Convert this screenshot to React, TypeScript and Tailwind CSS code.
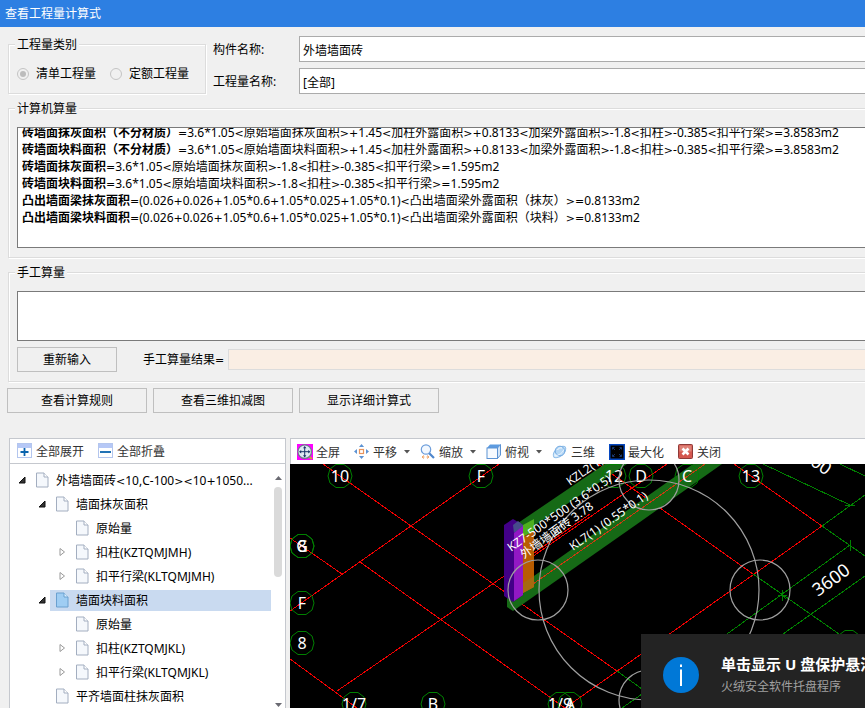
import { useState, type ReactNode } from 'react';

interface TreeItem {
  id: number;
  level: 0 | 1 | 2;
  label: string;
  state?: 'open' | 'closed';
}

const formulas = [
  { name: '砖墙面抹灰面积（不分材质）', value: '=3.6*1.05<原始墙面抹灰面积>+1.45<加柱外露面积>+0.8133<加梁外露面积>-1.8<扣柱>-0.385<扣平行梁>=3.8583m2' },
  { name: '砖墙面块料面积（不分材质）', value: '=3.6*1.05<原始墙面块料面积>+1.45<加柱外露面积>+0.8133<加梁外露面积>-1.8<扣柱>-0.385<扣平行梁>=3.8583m2' },
  { name: '砖墙面抹灰面积', value: '=3.6*1.05<原始墙面抹灰面积>-1.8<扣柱>-0.385<扣平行梁>=1.595m2' },
  { name: '砖墙面块料面积', value: '=3.6*1.05<原始墙面块料面积>-1.8<扣柱>-0.385<扣平行梁>=1.595m2' },
  { name: '凸出墙面梁抹灰面积', value: '=(0.026+0.026+1.05*0.6+1.05*0.025+1.05*0.1)<凸出墙面梁外露面积（抹灰）>=0.8133m2' },
  { name: '凸出墙面梁块料面积', value: '=(0.026+0.026+1.05*0.6+1.05*0.025+1.05*0.1)<凸出墙面梁外露面积（块料）>=0.8133m2' },
];

const treeItems: TreeItem[] = [
  { id: 1, level: 0, label: '外墙墙面砖<10,C-100><10+1050...', state: 'open' },
  { id: 2, level: 1, label: '墙面抹灰面积', state: 'open' },
  { id: 3, level: 2, label: '原始量' },
  { id: 4, level: 2, label: '扣柱(KZTQMJMH)', state: 'closed' },
  { id: 5, level: 2, label: '扣平行梁(KLTQMJMH)', state: 'closed' },
  { id: 6, level: 1, label: '墙面块料面积', state: 'open' },
  { id: 7, level: 2, label: '原始量' },
  { id: 8, level: 2, label: '扣柱(KZTQMJKL)', state: 'closed' },
  { id: 9, level: 2, label: '扣平行梁(KLTQMJKL)', state: 'closed' },
  { id: 10, level: 1, label: '平齐墙面柱抹灰面积' },
];

const indent = ['pl-1', 'pl-6', 'pl-11'];

// Grid axis bubbles: [x, y, label]
const axes: [number, number, string][] = [
  [50, 12, '10'],
  [191, 12, 'F'],
  [324, 12, '12'],
  [351, 12, 'D'],
  [397, 12, 'C'],
  [461, 12, '13'],
  [12, 82, 'G'],
  [12, 82, '8'],
  [12, 139, 'F'],
  [12, 179, '8'],
  [64, 240, '1/7'],
  [143, 240, 'B'],
  [270, 240, '1/9'],
  [280, 240, 'A'],
  [559, 178, ''],
];

function Formula({ text }: { text: string }) {
  return text.split(/([<>=+])/).map((part, i) =>
    i % 2 === 1 ? (
      <span key={i} className="font-['DejaVu_Sans',sans-serif] text-[11px] leading-none">{part}</span>
    ) : (
      part
    ),
  );
}

function Group({ title, className, children }: { title: string; className: string; children: ReactNode }) {
  return (
    <fieldset className={`min-w-0 border border-[#dcdcdc] shadow-[inset_1px_1px_0_#fff,1px_1px_0_#fff] ${className}`}>
      <legend className="ml-1.5 h-[18px] bg-[#f0f0f0] px-0.5 leading-[20px]">{title}</legend>
      {children}
    </fieldset>
  );
}

function PushButton({ className, children }: { className: string; children: ReactNode }) {
  return (
    <button type="button" className={`h-[25px] border border-[#bfbfbf] bg-[#f0f0f0] hover:bg-[#e5f1fb] ${className}`}>
      {children}
    </button>
  );
}

function ToolButton({ icon, label, menu }: { icon: ReactNode; label: string; menu?: boolean }) {
  return (
    <button type="button" className={`flex h-[22px] shrink-0 items-center gap-[3px] pl-1.5 text-[#333] hover:bg-[#e8effa] ${menu ? 'pr-0.5' : 'pr-1.5'}`}>
      {icon}
      <span className="pt-0.5">{label}</span>
      {menu && (
        <svg className="ml-1 h-1 w-1.5" viewBox="0 0 6 4">
          <path d="M0 0h6L3 3.5z" fill="#555" />
        </svg>
      )}
    </button>
  );
}

function ExpandIcon({ minus }: { minus?: boolean }) {
  return (
    <svg className="h-4 w-4" viewBox="0 0 16 16">
      <rect x=".5" y=".5" width="14" height="14" fill="#fff" stroke="#b4c6ee" />
      <rect x="1" y="1" width="13" height="4" fill="#b6c8f6" />
      <path d={minus ? 'M2 9h11' : 'M3.5 9h8M7.5 5v8'} stroke="#0a64ad" strokeWidth="1.8" />
    </svg>
  );
}

function FullScreenIcon() {
  return (
    <svg className="h-4 w-4" viewBox="0 0 16 16">
      <rect width="16" height="16" fill="#f0f" />
      <path d="M11.5 12l3.5 3" stroke="#c9a13a" strokeWidth="2" />
      <circle cx="7.7" cy="7.7" r="6.8" fill="#dfe9f2" stroke="#6f7d8c" strokeWidth="1.3" />
      <path d="M3 7.7h9.4M7.7 3v9.4" stroke="#1c3568" strokeWidth="1" />
      <path d="M7.7 2L9.4 4.2H6zM7.7 13.4l1.700-2.200H6zM2 7.700l2.200-1.700v3.400zM13.400 7.700l-2.200-1.700v3.400z" fill="#1c3568" />
    </svg>
  );
}

function PanIcon() {
  return (
    <svg className="h-4 w-4" viewBox="0 0 16 16">
      <rect x="5.5" y="5.5" width="4" height="4" fill="#fff" stroke="#e8945c" strokeWidth="1.2" />
      <path d="M7.5 0l2.6 3H5zM7.500 15l2.600-3H5zM0 7.500L3 5v5zM15 7.500L12 5v5z" fill="#5d93d3" />
    </svg>
  );
}

function ZoomIcon() {
  return (
    <svg className="h-4 w-4" viewBox="0 0 16 16">
      <path d="M9 9l5 5" stroke="#4e86cc" strokeWidth="2.2" />
      <circle cx="6" cy="5.5" r="4.7" fill="#f2f8ff" stroke="#6c9ddb" strokeWidth="1.2" />
      <path d="M2 13h2.500M6.500 13H9M4 11.500L2 13l2 1.500M7 11.500L9 13l-2 1.500" stroke="#f0a568" fill="none" />
    </svg>
  );
}

function CubeIcon() {
  return (
    <svg className="h-4 w-4" viewBox="0 0 16 16">
      <path d="M1 4l3-3.5h10.5L11.5 4z" fill="#5c9be0" />
      <path d="M11.5 4l3-3.5V11l-3 3.5z" fill="#d3e5f8" stroke="#5c93d4" />
      <rect x="1" y="4" width="10.5" height="10.5" fill="#f6faff" stroke="#5c93d4" />
    </svg>
  );
}

function OrbitIcon() {
  return (
    <svg className="h-4 w-4" viewBox="0 0 16 16">
      <ellipse cx="7.5" cy="8" rx="7.500" ry="4" transform="rotate(-40 7.5 8)" fill="#d9ecfb" stroke="#8dbce8" />
      <circle cx="8" cy="7" r="4.8" fill="#b5d7f5" stroke="#73aae2" />
      <path d="M3 11.500c4 0 7-2 9-6" stroke="#e8f4ff" fill="none" />
      <path d="M5.500 6c1-2 3-2.500 4.500-2" stroke="#fff" fill="none" />
    </svg>
  );
}

function MaximizeIcon() {
  return (
    <svg className="h-4 w-4" viewBox="0 0 16 16">
      <rect width="16" height="16" fill="#0648c0" />
      <rect x="1.5" y="1.5" width="13" height="13" fill="#000" />
      <path d="M3.500 5.500v-2h2M10.500 3.500h2v2M12.500 10.500v2h-2M5.500 12.500h-2v-2M4 4l2 2M12 4l-2 2M12 12l-2-2M4 12l2-2" stroke="#2450a0" strokeWidth=".7" fill="none" />
    </svg>
  );
}

function CloseIcon() {
  return (
    <svg className="h-4 w-4" viewBox="0 0 16 16">
      <rect x=".5" y=".5" width="14" height="14" rx="1" fill="#d4574f" stroke="#8e3a38" />
      <rect x="1.5" y="1.5" width="12" height="6" fill="#de8278" />
      <path d="M4.500 4.500l6 6M10.500 4.500l-6 6" stroke="#fff" strokeWidth="2.600" />
    </svg>
  );
}

function PageIcon({ active }: { active: boolean }) {
  return (
    <svg className="h-4 w-3.5 shrink-0" viewBox="0 0 14 16">
      <path d="M.5 1h7.5l4 4v10H.5z" fill={active ? '#9fcdf3' : '#f5f8fc'} stroke={active ? '#6ba0cf' : '#a3aec0'} />
      <path d="M8 1v4h4" fill={active ? '#dcefff' : '#fff'} stroke={active ? '#6ba0cf' : '#a3aec0'} />
    </svg>
  );
}

function Axis({ x, y, label }: { x: number; y: number; label: string }) {
  return (
    <g transform={`translate(${x} ${y})`}>
      <path d="M-4 -11.5H4L10 -7L12 0L10 7L4 11.5H-4L-10 7L-12 0L-10 -7z" fill="none" stroke="#008000" />
      <text y="6" textAnchor="middle" fontSize="16" fill="#fff">{label}</text>
    </g>
  );
}

function Viewport() {
  return (
    <svg className="absolute inset-0 h-full w-full" viewBox="0 0 575 244" preserveAspectRatio="xMinYMin slice">
      <g stroke="#f00000" strokeWidth="1" fill="none" shapeRendering="crispEdges">
        <path d="M33 0L327 207M209 0L0 147M0 74L52 110M70 98L275 244M47 227L377 0M0 195L67 244" />
        <path d="M308 0L463 110M444 0L532 62L275 244" />
      </g>
      <g stroke="#008000" fill="none" shapeRendering="crispEdges">
        <path d="M463 110L549 170M532 62L575 92M532 62L575 31M473 0L560 41M550 0L575 12" />
        <path d="M560 81L437 170M575 112L493 170M327 207L352 225M352 230L332 244" />
        <path d="M555 41.500H565M560 76V87M492 126V137M488 131H497M489 128L496 135" />
      </g>

      {/* Beams and wall */}
      <path d="M228 59L315 0H337L244 62L233 68z" fill="#166a16" />
      <path d="M217 131L403 0H432L350 58L223 147L217 143z" fill="#166a16" />
      <path d="M243 120L415 0" stroke="#c83c10" shapeRendering="crispEdges" />
      <path d="M214 61L223 55L233 61V131L223 138L214 132z" fill="#420087" />
      <path d="M223 61L228 57L233 61V63L224 69z" fill="#474a8b" />
      <path d="M224 69L233 62V131L224 137z" fill="#9218c4" />
      <path d="M233 61L244 55V67L233 73z" fill="#4eb01e" />
      <path d="M233 73L244 67V123L233 129z" fill="#b85c00" />
      <path d="M233 119L244 112V123L233 129z" fill="#a66a10" />
      <path d="M244 89L300 50" stroke="#f00000" shapeRendering="crispEdges" />

      {axes.map(([x, y, label], i) => (
        <Axis key={i} x={x} y={y} label={label} />
      ))}

      <g stroke="#a0a0a0" strokeWidth="1.2" fill="none">
        <circle cx="359" cy="126" r="110" />
        <circle cx="248" cy="126" r="30" />
        <circle cx="470" cy="126" r="30" />
        <circle cx="359" cy="16" r="30" />
        <circle cx="359" cy="236" r="30" />
      </g>

      <g fill="#fff" fontSize="12">
        <text transform="translate(280 22) rotate(-35)">KZL2(1)</text>
        <text transform="translate(221 88) rotate(-35)">KZ7-500*500 (3.6*0.5)</text>
        <text transform="translate(234 95) rotate(-36)">外墙墙面砖 3.78</text>
        <text transform="translate(283 87) rotate(-35)">KL7(1) (0.55*0.1)</text>
        <text transform="translate(528 133) rotate(-36)" fontSize="18">3600</text>
        <text transform="translate(536 12) rotate(35)" fontSize="18" textAnchor="end">3600</text>
      </g>
    </svg>
  );
}

export default function App() {
  const [selected, setSelected] = useState(6);

  return (
    <div className="flex h-screen flex-col overflow-hidden bg-[#f0f0f0] font-['Noto_Sans','Noto_Sans_CJK_SC',sans-serif] text-xs text-black">
      <header className="flex h-[27px] shrink-0 items-center bg-[#2d7fe2] px-[5px] text-white">
        <h1>查看工程量计算式</h1>
      </header>

      <main className="flex min-h-0 flex-1 flex-col pt-2">
        {/* Filters */}
        <div className="flex shrink-0 pl-2">
          <Group title="工程量类别" className="h-[59px] w-[198px] shrink-0">
            <div className="flex items-center pt-[13px] pl-2">
              <label className="flex items-center gap-[7px]">
                <input type="radio" name="kind" defaultChecked disabled className="h-3 w-3 appearance-none rounded-full border border-[#c4c4c4] bg-[#f0f0f0] p-0.5 checked:bg-[#bcbcbc] checked:bg-clip-content" />
                清单工程量
              </label>
              <label className="ml-[14px] flex items-center gap-[7px]">
                <input type="radio" name="kind" disabled className="h-3 w-3 appearance-none rounded-full border border-[#c4c4c4] bg-[#f0f0f0]" />
                定额工程量
              </label>
            </div>
          </Group>
          <div className="ml-[7px] grid flex-1 grid-cols-[86px_1fr] items-center gap-y-1.5 pt-px">
            <label htmlFor="member" className="pt-0.5">构件名称:</label>
            <input id="member" readOnly value="外墙墙面砖" className="h-[26px] w-full min-w-0 border border-r-0 border-[#ababab] bg-white px-[3px] pt-px outline-none" />
            <label htmlFor="quantity" className="pt-0.5">工程量名称:</label>
            <input id="quantity" readOnly value="[全部]" className="h-[26px] w-full min-w-0 border border-r-0 border-[#ababab] bg-white px-[3px] pt-px outline-none" />
          </div>
        </div>

        {/* Computed */}
        <Group title="计算机算量" className="mt-[5px] ml-2 shrink-0 border-r-0 pb-[9px]">
          <div className="mt-2.5 ml-2 h-[121px] overflow-hidden border border-r-0 border-[#7a7a7a] bg-white px-1">
            <div className="-mt-1">
              {formulas.map((f) => (
                <p key={f.name} className="h-[17px] leading-[17px] whitespace-nowrap">
                  <b>{f.name}</b>
                  <Formula text={f.value} />
                </p>
              ))}
            </div>
          </div>
        </Group>

        {/* Manual */}
        <Group title="手工算量" className="mt-[5px] ml-2 shrink-0 border-r-0 pb-[9px]">
          <div className="pt-2.5 pl-2">
            <textarea aria-label="手工算量" className="block h-[50px] w-full resize-none border border-r-0 border-[#7a7a7a] bg-white px-1 outline-none" />
            <div className="mt-1.5 flex items-center">
              <PushButton className="w-[100px]">重新输入</PushButton>
              <label htmlFor="result" className="ml-[26px]">
                <Formula text="手工算量结果=" />
              </label>
              <input id="result" readOnly className="ml-1 h-[21px] min-w-0 flex-1 border border-r-0 border-[#dcdcdc] bg-[#faeee4] px-1 outline-none" />
            </div>
          </div>
        </Group>

        <div className="mt-1.5 flex shrink-0 gap-1.5 pl-[7px]">
          <PushButton className="w-[140px]">查看计算规则</PushButton>
          <PushButton className="w-[140px]">查看三维扣减图</PushButton>
          <PushButton className="w-[140px]">显示详细计算式</PushButton>
        </div>

        <div className="mt-[25px] flex min-h-0 flex-1 gap-1 pl-[9px]">
          {/* Tree */}
          <section className="flex w-[277px] shrink-0 flex-col border border-b-0 border-[#c5c8ce] bg-white">
            <div className="flex h-[25px] shrink-0 items-center gap-0.5 border-b border-[#c5c8ce] pl-px">
              <ToolButton icon={<ExpandIcon />} label="全部展开" />
              <ToolButton icon={<ExpandIcon minus />} label="全部折叠" />
            </div>
            <div className="flex min-h-0 flex-1">
              <ul className="min-w-0 flex-1 overflow-hidden pt-1">
                {treeItems.map((item) => (
                  <li key={item.id} className={`flex h-6 items-center ${indent[item.level]}`}>
                    <span className="flex w-4 shrink-0 justify-center">
                      {item.state === 'open' && (
                        <svg className="h-2 w-2" viewBox="0 0 8 8">
                          <path d="M7 1v6H1z" fill="#333" stroke="#111" />
                        </svg>
                      )}
                      {item.state === 'closed' && (
                        <svg className="h-2 w-2" viewBox="0 0 8 8">
                          <path d="M2 .5L6.500 4L2 7.500z" fill="#fff" stroke="#999" />
                        </svg>
                      )}
                    </span>
                    <button
                      type="button"
                      onClick={() => setSelected(item.id)}
                      className={`flex h-[21px] min-w-0 flex-1 items-center gap-1.5 pl-1.5 text-left whitespace-nowrap ${selected === item.id ? 'bg-[#c9daf0]' : ''}`}
                    >
                      <PageIcon active={selected === item.id} />
                      <span className="pt-0.5">
                        <Formula text={item.label} />
                      </span>
                    </button>
                  </li>
                ))}
              </ul>
              <div className="flex w-3.5 flex-col items-center pt-3">
                <svg className="h-1 w-[7px] shrink-0" viewBox="0 0 7 4">
                  <path d="M0 4L3.500 0L7 4z" fill="#6a6a72" />
                </svg>
                <div className="mt-[7px] h-[90px] w-2 shrink-0 rounded-full bg-[#dadada]" />
                <svg className="mt-auto mb-px h-1 w-[7px] shrink-0" viewBox="0 0 7 4">
                  <path d="M0 0h7L3.500 4z" fill="#6a6a72" />
                </svg>
              </div>
            </div>
          </section>

          {/* 3D view */}
          <section className="flex min-w-0 flex-1 flex-col border-t border-l border-[#c5c8ce] bg-white">
            <div className="flex h-[25px] shrink-0 items-center gap-0.5 overflow-hidden">
              <ToolButton icon={<FullScreenIcon />} label="全屏" />
              <ToolButton icon={<PanIcon />} label="平移" menu />
              <ToolButton icon={<ZoomIcon />} label="缩放" menu />
              <ToolButton icon={<CubeIcon />} label="俯视" menu />
              <ToolButton icon={<OrbitIcon />} label="三维" />
              <ToolButton icon={<MaximizeIcon />} label="最大化" />
              <ToolButton icon={<CloseIcon />} label="关闭" />
            </div>
            <div className="relative -ml-px min-h-0 flex-1 overflow-hidden bg-black">
              <Viewport />
            </div>
          </section>
        </div>
      </main>

      {/* Notification */}
      <aside className="absolute right-0 bottom-0 flex h-[74px] w-[224px] items-center gap-[22px] overflow-hidden bg-[#232323] pt-2 pl-[22px]">
        <svg className="h-9 w-9 shrink-0" viewBox="0 0 36 36">
          <circle cx="18" cy="18" r="18" fill="#0078d7" />
          <path d="M18 7.500v2.500M18 12.500V29" stroke="#fff" strokeWidth="2" />
        </svg>
        <div className="whitespace-nowrap">
          <p className="text-[15px] leading-6 font-bold text-white">单击显示 U 盘保护悬浮窗</p>
          <p className="leading-[22px] text-[#a0a0a0]">火绒安全软件托盘程序</p>
        </div>
      </aside>
    </div>
  );
}
